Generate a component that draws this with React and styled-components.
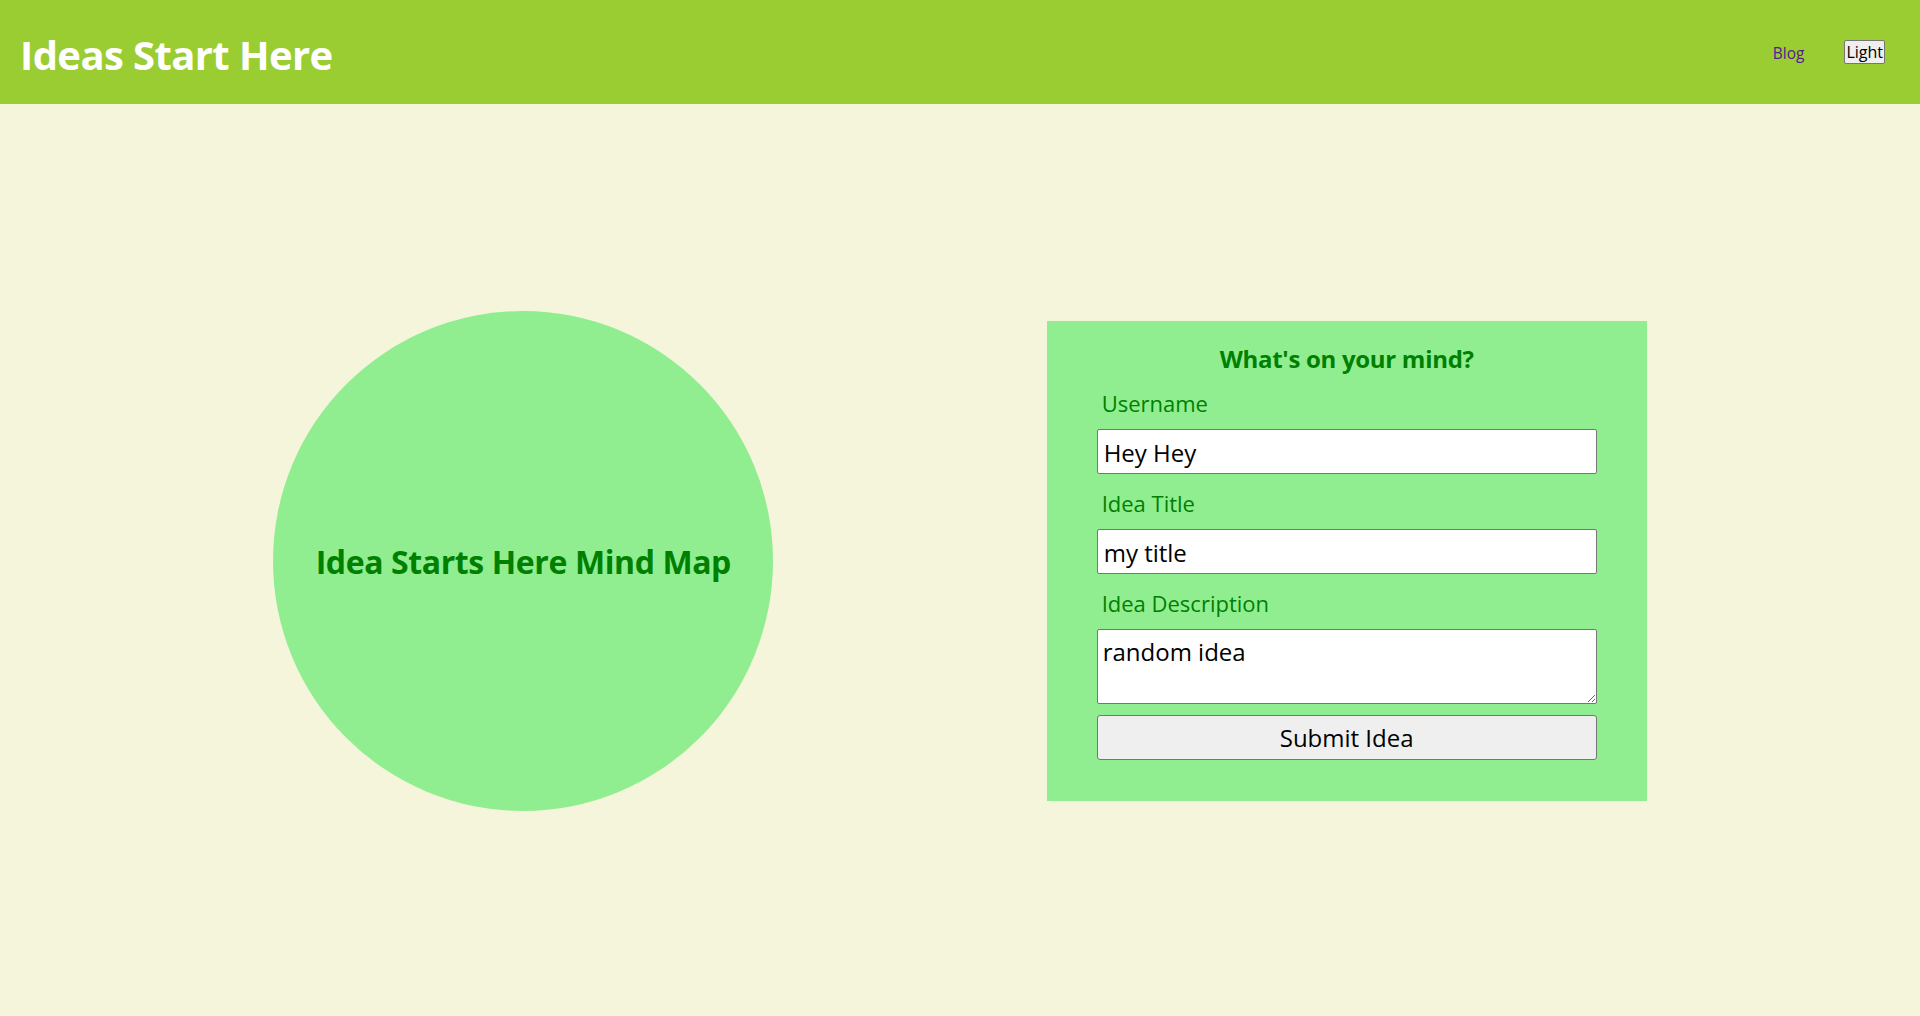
import React from "react";
import styled, { createGlobalStyle } from "styled-components";

const GlobalStyle = createGlobalStyle`
  html, body {
    margin: 0;
    padding: 0;
    height: 100%;
  }
  body {
    background: #f5f5dc;
    font-family: "Open Sans", "Noto Sans", "Noto Sans CJK KR", sans-serif;
  }
  #root {
    min-height: 100vh;
    display: flex;
    flex-direction: column;
  }
  * { box-sizing: border-box; }
`;

const Header = styled.header`
  flex: 0 0 104px;
  height: 104px;
  background: #9acd32;
  display: flex;
  align-items: center;
  justify-content: space-between;
  padding: 0 35px 0 20px;
`;

const Brand = styled.h1`
  margin: 5px 0 0;
  font-size: 40px;
  line-height: 42px;
  font-weight: 700;
  color: #ffffff;
  letter-spacing: -0.6px;
`;

const Nav = styled.nav`
  display: flex;
  align-items: center;
  gap: 40px;
`;

const NavLink = styled.a`
  font-size: 15.5px;
  color: #551a8b;
  text-decoration: none;
  margin-top: 2px;
`;

const ThemeButton = styled.button`
  font-family: inherit;
  font-size: 16px;
  line-height: 22px;
  padding: 0 1px;
  background: #efefef;
  color: #000;
  border: 1px solid #767676;
  border-radius: 2px;
  cursor: pointer;
`;

const Main = styled.main`
  flex: 1;
  display: flex;
  align-items: center;
  justify-content: space-evenly;
  padding-top: 2px;
`;

const MindMap = styled.div`
  width: 500px;
  height: 500px;
  border-radius: 50%;
  background: #90ee90;
  display: flex;
  align-items: center;
  justify-content: center;
`;

const MindMapTitle = styled.h2`
  margin: 0;
  font-size: 32px;
  font-weight: 700;
  color: #008000;
  letter-spacing: -0.4px;
`;

const Panel = styled.form`
  width: 600px;
  background: #90ee90;
  padding: 22px 50px 41px;
  display: flex;
  flex-direction: column;
`;

const PanelTitle = styled.h3`
  margin: 0 0 13px;
  font-size: 24px;
  line-height: 32px;
  font-weight: 700;
  color: #008000;
  text-align: center;
  letter-spacing: -0.3px;
`;

const Label = styled.label`
  display: block;
  font-size: 22px;
  line-height: 30px;
  color: #008000;
  padding-left: 5px;
  margin: ${(p) => (p.$first ? "0" : "14px")} 0 11px;
`;

const fieldBase = `
  width: 100%;
  font-family: inherit;
  font-size: 24px;
  color: #000;
  background: #fff;
  border: 1px solid #767676;
  border-radius: 2px;
  outline: none;
`;

const TextInput = styled.input`
  ${fieldBase}
  height: 45px;
  padding: 1px 6px 0;
`;

const TextArea = styled.textarea`
  ${fieldBase}
  height: 75px;
  padding: 5px 5px;
  resize: vertical;
  line-height: normal;
`;

const SubmitButton = styled.button`
  margin-top: 11px;
  height: 45px;
  width: 100%;
  font-family: inherit;
  font-size: 24px;
  color: #000;
  background: #efefef;
  border: 1px solid #767676;
  border-radius: 3px;
  cursor: pointer;
`;

export default function App() {
  return (
    <>
      <GlobalStyle />
      <Header>
        <Brand>Ideas Start Here</Brand>
        <Nav>
          <NavLink href="#blog">Blog</NavLink>
          <ThemeButton type="button">Light</ThemeButton>
        </Nav>
      </Header>
      <Main>
        <MindMap>
          <MindMapTitle>Idea Starts Here Mind Map</MindMapTitle>
        </MindMap>
        <Panel onSubmit={(e) => e.preventDefault()}>
          <PanelTitle>What's on your mind?</PanelTitle>
          <Label $first htmlFor="username">Username</Label>
          <TextInput id="username" defaultValue="Hey Hey" />
          <Label htmlFor="title">Idea Title</Label>
          <TextInput id="title" defaultValue="my title" />
          <Label htmlFor="desc">Idea Description</Label>
          <TextArea id="desc" defaultValue="random idea" />
          <SubmitButton type="submit">Submit Idea</SubmitButton>
        </Panel>
      </Main>
    </>
  );
}
